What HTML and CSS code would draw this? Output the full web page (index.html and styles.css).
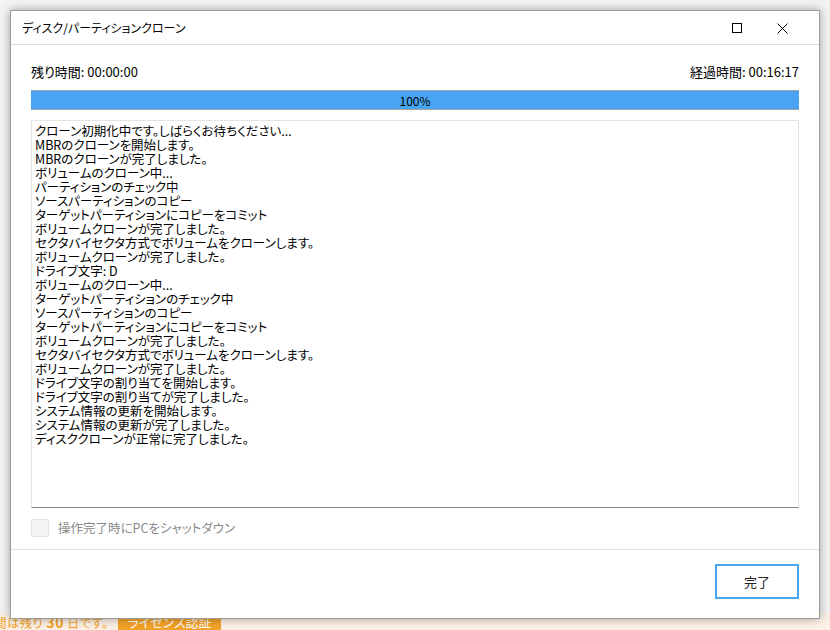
FILE: index.html
```html
<!DOCTYPE html>
<html lang="ja">
<head>
    <meta charset="UTF-8">
    <title>ディスク/パーティションクローン</title>
    <link rel="stylesheet" href="styles.css">
</head>
<body>

<div class="dialog">
    <div class="titlebar">
        <span class="title">ディスク/パーティションクローン</span>
        <div class="controls">
            <svg class="ctl" width="10" height="10" viewBox="0 0 10 10">
                <rect x="0.5" y="0.5" width="9" height="9" fill="none" stroke="#000" stroke-width="1"/>
            </svg>
            <svg class="ctl" width="11" height="11" viewBox="0 0 11 11">
                <path d="M0.5 0.5 L10.5 10.5 M10.5 0.5 L0.5 10.5" stroke="#000" stroke-width="1"/>
            </svg>
        </div>
    </div>

    <div class="content">
        <div class="status">
            <span>残り時間: 00:00:00</span>
            <span>経過時間: 00:16:17</span>
        </div>
        <div class="progress">
            <div class="fill"></div>
            <span class="percent">100%</span>
        </div>
        <div class="log">
            <div>クローン初期化中です。しばらくお待ちください...</div>
            <div>MBRのクローンを開始します。</div>
            <div>MBRのクローンが完了しました。</div>
            <div>ボリュームのクローン中...</div>
            <div>パーティションのチェック中</div>
            <div>ソースパーティションのコピー</div>
            <div>ターゲットパーティションにコピーをコミット</div>
            <div>ボリュームクローンが完了しました。</div>
            <div>セクタバイセクタ方式でボリュームをクローンします。</div>
            <div>ボリュームクローンが完了しました。</div>
            <div>ドライブ文字: D</div>
            <div>ボリュームのクローン中...</div>
            <div>ターゲットパーティションのチェック中</div>
            <div>ソースパーティションのコピー</div>
            <div>ターゲットパーティションにコピーをコミット</div>
            <div>ボリュームクローンが完了しました。</div>
            <div>セクタバイセクタ方式でボリュームをクローンします。</div>
            <div>ボリュームクローンが完了しました。</div>
            <div>ドライブ文字の割り当てを開始します。</div>
            <div>ドライブ文字の割り当てが完了しました。</div>
            <div>システム情報の更新を開始します。</div>
            <div>システム情報の更新が完了しました。</div>
            <div>ディスククローンが正常に完了しました。</div>
        </div>
        <label class="shutdown">
            <span class="checkbox"></span>
            <span>操作完了時にPCをシャットダウン</span>
        </label>
    </div>

    <div class="footer">
        <button class="done">完了</button>
    </div>
</div>

<div class="trial">
    <span class="trial-text">期間は残り <b>30</b> 日です。</span>
    <span class="license">ライセンス認証</span>
</div>

</body>
</html>
```

FILE: styles.css
```css
html, body {
    margin: 0;
    height: 630px;
    overflow: hidden;
}
body {
    background: #f3f3f3;
    font-family: "Noto Sans CJK JP", "Liberation Sans", sans-serif;
    font-feature-settings: "palt";
    color: #000;
}
.dialog {
    position: relative;
    z-index: 1;
    margin: 10px 0 0 10px;
    width: 808px;
    height: 607px;
    background: #fff;
    border: 1px solid #9a9a9a;
    box-shadow: 0 0 9px rgba(0, 0, 0, 0.35);
    display: flex;
    flex-direction: column;
}
.titlebar {
    height: 33px;
    border-bottom: 1px solid #dcdcdc;
    display: flex;
    align-items: center;
    justify-content: space-between;
    padding-left: 11px;
}
.title {
    font-size: 12px;
}
.controls {
    display: flex;
    align-items: center;
    gap: 35px;
    padding-right: 31px;
    padding-top: 1px;
}
.content {
    padding: 0 20px;
}
.status {
    display: flex;
    justify-content: space-between;
    font-size: 13px;
    line-height: 14px;
    margin-top: 20px;
}
.progress {
    position: relative;
    margin-top: 11px;
    height: 18px;
    border-top: 1px solid #a3a3a3;
    border-bottom: 1px solid #a3a3a3;
    background: #e6e6e6;
    display: flex;
    align-items: center;
    justify-content: center;
}
.fill {
    position: absolute;
    left: 0;
    top: 0;
    bottom: 0;
    width: 100%;
    background: #49a5f1;
}
.percent {
    position: relative;
    font-size: 12px;
}
.log {
    margin-top: 10px;
    height: 383px;
    border: 1px solid #e4e4e4;
    border-bottom: 1px solid #858585;
    padding: 3px 3px 0;
    font-size: 12.5px;
    line-height: 14px;
    overflow: hidden;
}
.shutdown {
    display: flex;
    align-items: center;
    gap: 9px;
    margin-top: 10px;
    font-size: 12.5px;
    color: #8a8a8a;
}
.checkbox {
    width: 16px;
    height: 16px;
    background: #f5f5f5;
    border: 1px solid #e2e2e2;
    border-radius: 2px;
}
.footer {
    margin-top: auto;
    border-top: 1px solid #dde3e8;
    height: 68px;
    display: flex;
    justify-content: flex-end;
    align-items: flex-start;
    padding-right: 20px;
}
.done {
    margin-top: 14px;
    width: 84px;
    height: 35px;
    background: #fff;
    border: 2px solid #4aa6f0;
    font-family: inherit;
    font-size: 13px;
    color: #222;
}
.trial {
    margin-top: -6px;
    height: 17px;
    background: #fdf1e6;
    display: flex;
    align-items: center;
    gap: 10px;
    font-size: 12px;
    color: #f0a020;
    overflow: hidden;
}
.trial-text {
    margin-left: -18px;
    letter-spacing: 0.6px;
    white-space: nowrap;
}
.trial-text b {
    font-size: 14px;
}
.license {
    background: #f3a228;
    color: #fff;
    padding: 0 9px;
    line-height: 17px;
    font-size: 13px;
    white-space: nowrap;
}
```
